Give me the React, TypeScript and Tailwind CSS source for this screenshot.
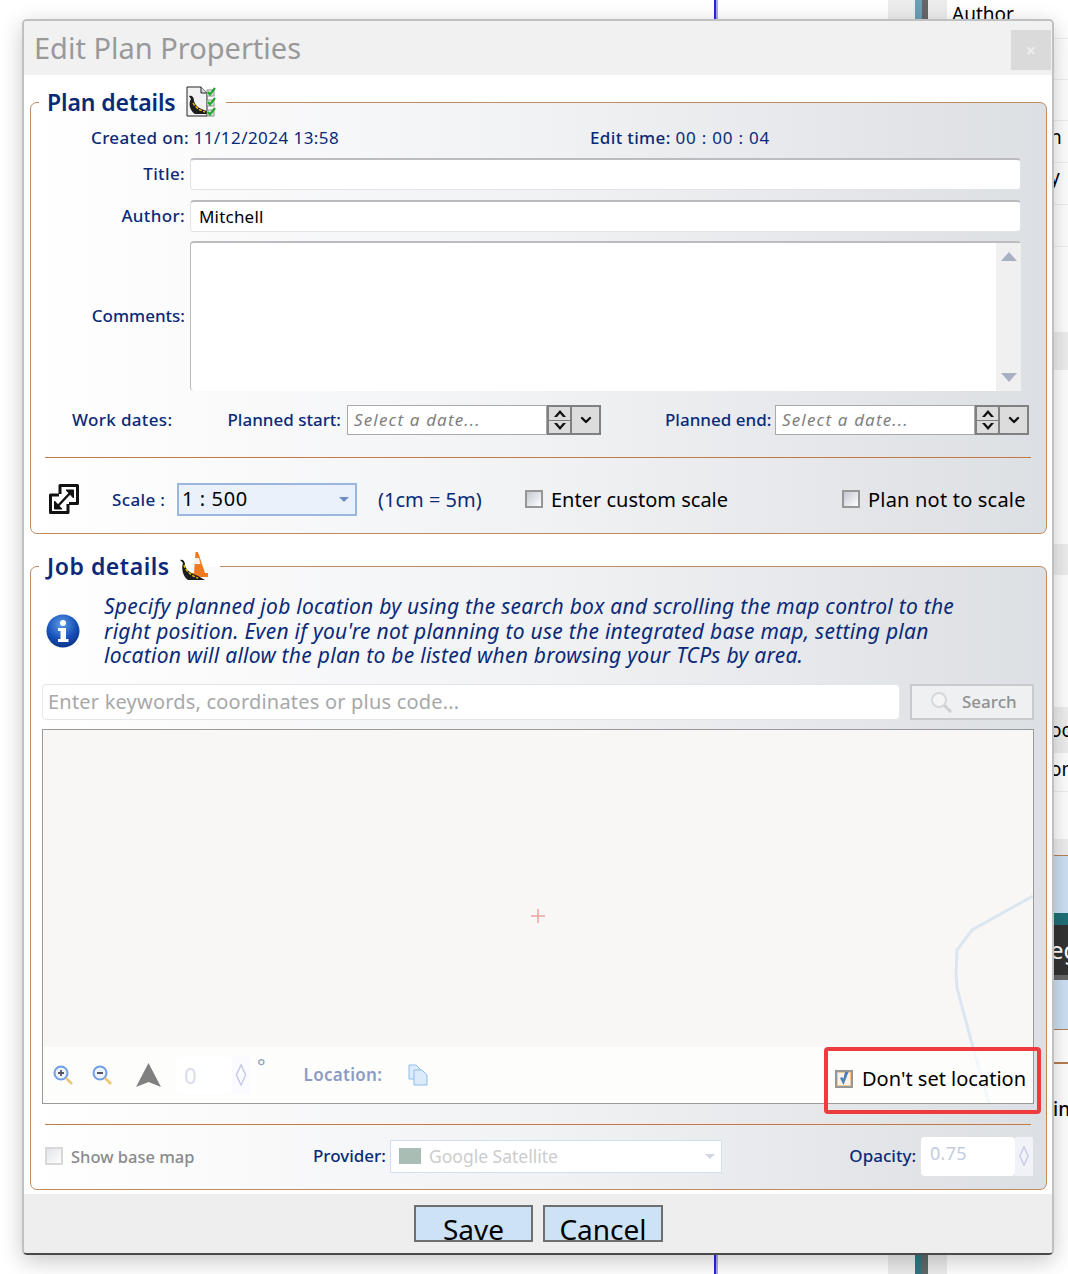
import React from "react";
import { ChevronDown } from "lucide-react";

const FONT = "font-['Noto_Sans','DejaVu_Sans',sans-serif]";

const BackgroundRow = ({ h, text, band, x = 103, pb = 0 }: { h: number; text?: string; band?: boolean; x?: number; pb?: number }) => (
  <div
    className={`flex items-center border-b border-[#eeeeee] text-[19px] text-black ${band ? "bg-[#eeeeee]" : "bg-white"}`}
    style={{ height: h, paddingLeft: x, paddingBottom: pb }}
  >
    {text}
  </div>
);

const PageBehind = () => (
  <div className="absolute inset-0 flex bg-white">
    <div className="w-[714px]" />
    <div className="w-[4px] border-l-2 border-[#2a22d8] bg-[#a9a6f0]" />
    <div className="w-[170px]" />
    <div className="w-[27px] bg-[#ececec]" />
    <div className="w-[7px] bg-gradient-to-b from-[#6a9fb5] to-[#2a7a80]" />
    <div className="w-[6px] bg-[#666666]" />
    <div className="w-[19px] bg-[#ececec]" />
    <div className="flex w-[121px] flex-col overflow-hidden">
      <BackgroundRow h={39} text="Author" x={5} pb={9} />
      <BackgroundRow h={41} />
      <BackgroundRow h={41} />
      <BackgroundRow h={42} text="n" pb={8} />
      <BackgroundRow h={42} text="y" pb={12} />
      <BackgroundRow h={42} />
      <BackgroundRow h={86} />
      <BackgroundRow h={37} band />
      <BackgroundRow h={175} />
      <BackgroundRow h={30} band />
      <BackgroundRow h={133} />
      <BackgroundRow h={45} text="oo" band />
      <BackgroundRow h={39} text="on" pb={6} />
      <BackgroundRow h={48} />
      <BackgroundRow h={15} band />
      <div className="flex h-[175px] flex-col border-y border-[#b87f50] bg-[#cde0f5]">
        <div className="h-[57px]" />
        <div className="h-[12px] bg-[#1f7078]" />
        <div className="flex h-[50px] items-center bg-[#333333] pl-[103px] text-[24px] text-white">eg</div>
        <div className="h-[5px] bg-[#666666]" />
      </div>
      <div className="h-[32px]" />
      <div className="h-[2px] bg-[#b87f50]" />
      <div className="flex h-[90px] items-center pl-[106px] text-[19px] font-medium text-black">in</div>
    </div>
  </div>
);

const Checkbox = ({ checked, dim }: { checked?: boolean; dim?: boolean }) => (
  <div
    className={`flex size-[18px] shrink-0 items-center justify-center border-2 ${dim ? "border-[#d8d8d8]" : "border-[#969696]"} ${
      checked ? "bg-[#f7c79b]" : dim ? "bg-gradient-to-br from-[#e2e4e8] to-white" : "bg-gradient-to-br from-[#c3c8d2] to-white"
    }`}
  >
    {checked && (
      <svg viewBox="0 0 14 14" className="size-[14px]">
        <rect x="1" y="1" width="12" height="12" fill="#fff3e6" />
        <path d="M3 6 L6.5 13 L11.5 0 L8 0 L6.3 7 L5.3 5 Z" fill="#4a7fc0" />
      </svg>
    )}
  </div>
);

const DatePicker = () => (
  <div className="flex h-[30px] w-[254px]">
    <div className="flex w-[200px] items-center border border-[#a9a9a9] bg-white pl-[6px] text-[17px] italic tracking-[1.15px] text-[#7f7f7f]">
      Select a date...
    </div>
    <div className="flex w-[25px] flex-col border-2 border-[#808080] bg-[#dcdcdc]">
      <div className="flex flex-1 items-center justify-center border-b border-[#808080]">
        <svg viewBox="0 0 12 7" className="w-[12px]"><path d="M0 7 L6 0 L12 7 L9 7 L6 3.5 L3 7 Z" fill="#111" /></svg>
      </div>
      <div className="flex flex-1 items-center justify-center">
        <svg viewBox="0 0 12 7" className="w-[12px]"><path d="M0 0 L6 7 L12 0 L9 0 L6 3.5 L3 0 Z" fill="#111" /></svg>
      </div>
    </div>
    <div className="flex w-[29px] items-center justify-center border-2 border-l-0 border-[#808080] bg-[#dcdcdc]">
      <ChevronDown size={16} strokeWidth={3.5} color="#111" />
    </div>
  </div>
);

const TextBox = ({ value }: { value?: string }) => (
  <div className="ml-[5px] flex h-[32px] w-[831px] items-center rounded-[4px] border border-t-2 border-[#e1e3e8] border-t-[#bcbcc0] bg-white pl-[8px] text-[17px] tracking-[0.2px] text-black">
    {value}
  </div>
);

const Slug = ({ x = 0, y = 0 }: { x?: number; y?: number }) => (
  <g transform={`translate(${x} ${y})`}>
    <path d="M2 2 C5 1 7 3 7 7 C8 12 13 15 20 17 L22 20 L8 20 C3 17 1 9 4 5 Z" fill="#1c1c1c" />
    <path d="M6 9 C8 13 12 16 18 18" stroke="#f2c200" strokeWidth="1.4" strokeDasharray="3 1.5" fill="none" />
  </g>
);

const PlanIcon = () => (
  <svg viewBox="0 0 30 32" className="h-[32px] w-[30px]">
    <path d="M1 1 H15 L21 7 V30 H1 Z" fill="#f2f2f2" stroke="#222" strokeWidth="1" />
    <path d="M15 1 V7 H21" fill="#ddd" stroke="#222" strokeWidth="1" />
    <Slug x={1} y={8} />
    {[4, 14, 24].map((y) => (
      <g key={y}>
        <rect x="21" y={y} width="7" height="6" fill="#e8e8e8" stroke="#777" strokeWidth="0.8" />
        <path d={`M22 ${y + 2} L24 ${y + 4.5} L29 ${y - 2}`} stroke="#1faa2e" strokeWidth="2.2" fill="none" />
      </g>
    ))}
  </svg>
);

const ConeIcon = () => (
  <svg viewBox="0 0 30 30" className="h-[30px] w-[30px]">
    <path d="M15.5 1 L18 1 L25 22 H28 V26 H12 V22 H14 Z" fill="#f07a22" />
    <path d="M15 7 H19 L20.5 13 H13.5 Z" fill="#f4f0ea" />
    <path d="M0 9 C3 8 5 10 5 14 C6 19 10 22 18 25 L25 29 H8 C3 26 1 17 3 12 Z" fill="#1c1c1c" />
    <path d="M4 14 C6 20 10 24 18 27" stroke="#f2c200" strokeWidth="1.4" strokeDasharray="3 1.5" fill="none" />
  </svg>
);

const ScaleIcon = () => (
  <svg viewBox="0 0 32 32" className="h-[32px] w-[32px]" fill="none" stroke="#111" strokeWidth="3">
    <path d="M12 11 V2.5 H29.5 V20.5 H21" strokeLinejoin="round" />
    <path d="M11 12 H2.5 V29.5 H20 V21" strokeLinejoin="round" />
    <path d="M8 25 L24 8" strokeWidth="2.4" />
    <path d="M18 7 H25.5 V15 Z" fill="#111" strokeWidth="1" />
    <path d="M6.5 18 V26 H14 Z" fill="#111" strokeWidth="1" />
  </svg>
);

const InfoIcon = () => (
  <svg viewBox="0 0 34 34" className="size-[34px]">
    <defs>
      <radialGradient id="infoBlue" cx="45%" cy="30%" r="75%">
        <stop offset="0%" stopColor="#5f9be8" />
        <stop offset="60%" stopColor="#1550b8" />
        <stop offset="100%" stopColor="#0a2f80" />
      </radialGradient>
    </defs>
    <circle cx="17" cy="17" r="16.5" fill="url(#infoBlue)" />
    <circle cx="17" cy="9" r="3" fill="#fff" />
    <path d="M12 14 H20 V25 H22.5 V28 H12 V25 H14.5 V17 H12 Z" fill="#fff" />
  </svg>
);

const ZoomIcon = ({ plus }: { plus?: boolean }) => (
  <svg viewBox="0 0 20 20" className="size-[20px]">
    <circle cx="8" cy="8" r="6.5" fill="#eef4fc" stroke="#6f9ee6" strokeWidth="2" />
    <path d="M5 8 H11" stroke="#556" strokeWidth="1.8" />
    {plus && <path d="M8 5 V11" stroke="#556" strokeWidth="1.8" />}
    <path d="M13 13 L19 19" stroke="#eec676" strokeWidth="2.6" />
  </svg>
);

const Diamond = ({ h = 22 }: { h?: number }) => (
  <svg viewBox="0 0 12 24" style={{ height: h }} className="w-[12px]" fill="none" stroke="#c3cbe6" strokeWidth="1.6">
    <path d="M6 1 L11 12 L6 23 L1 12 Z" />
  </svg>
);

const Fieldset = ({ legend, icon, children, className, legendClass }: { legend: string; icon: React.ReactNode; children: React.ReactNode; className: string; legendClass: string }) => (
  <fieldset className={`ml-[6px] mr-[5px] rounded-[7px] border border-[#c08a5e] bg-gradient-to-r from-white via-[#f1f2f4] to-[#dcdfe3] ${className}`}>
    <legend className={`ml-[8px] flex h-[30px] items-center gap-[10px] pl-[8px] pr-[10px] text-[23px] font-semibold text-[#0a2a78] ${legendClass}`}>
      {legend}
      {icon}
    </legend>
    {children}
  </fieldset>
);

const labelCls = "whitespace-nowrap text-[17px] font-medium tracking-[0.35px] text-[#0a2a78]";
const plainLabelCls = "whitespace-nowrap text-[17px] font-medium text-[#0a2a78]";

export default function App() {
  return (
    <div className={`relative h-[1274px] w-[1068px] overflow-hidden bg-white ${FONT}`}>
      <PageBehind />
      <div className="absolute left-[22px] top-[19px] flex h-[1236px] w-[1032px] flex-col overflow-hidden rounded-[5px] border-2 border-[#c0c0c0] border-b-[#4a4a4a] bg-white shadow-[0_6px_22px_rgba(0,0,0,0.22)]">
        <div className="flex h-[54px] shrink-0 justify-between bg-[#f1f1f1] pl-[10px] pr-[1px]">
          <div className="self-center text-[29px] text-[#999999]">Edit Plan Properties</div>
          <div className="mt-[9px] flex size-[40px] items-center justify-center bg-[#dadada] text-[18px] font-bold leading-none text-[#ededed]">×</div>
        </div>

        <div className="relative flex-1">
          <Fieldset legend="Plan details" icon={<PlanIcon />} className="mt-[12px] h-[447px]" legendClass="tracking-[-0.1px]">
            <div className="mt-[9px] flex h-[24px] items-center">
              <div className={`${labelCls} ml-[60px] w-[499px]`}>
                Created on: <span className="font-normal tracking-[0.45px]">11/12/2024 13:58</span>
              </div>
              <div className={labelCls}>
                Edit time: <span className="font-normal tracking-[0.8px]">00 : 00 : 04</span>
              </div>
            </div>
            <div className="mt-[8px] flex items-center">
              <div className={`${labelCls} w-[154px] text-right`}>Title:</div>
              <TextBox />
            </div>
            <div className="mt-[10px] flex items-center">
              <div className={`${labelCls} w-[154px] text-right`}>Author:</div>
              <TextBox value="Mitchell" />
            </div>
            <div className="mt-[9px] flex items-center">
              <div className={`${plainLabelCls} w-[154px] text-right`}>Comments:</div>
              <div className="ml-[5px] flex h-[150px] w-[831px] rounded-[4px] border-l border-t-2 border-[#bcbcc0] bg-white">
                <div className="flex-1" />
                <div className="flex w-[25px] flex-col items-center justify-between bg-[#f0f0f0] py-[9px]">
                  <div className="size-0 border-x-[8px] border-b-[9px] border-x-transparent border-b-[#a9b0c4]" />
                  <div className="size-0 border-x-[8px] border-t-[9px] border-x-transparent border-t-[#a9b0c4]" />
                </div>
              </div>
            </div>
            <div className="mt-[14px] flex h-[30px] items-center">
              <div className={`${labelCls} ml-[41px] w-[148px]`}>Work dates:</div>
              <div className={`${plainLabelCls} w-[121px] text-right`}>Planned start:</div>
              <div className="ml-[6px]"><DatePicker /></div>
              <div className={`${plainLabelCls} ml-[64px] w-[105px] text-right`}>Planned end:</div>
              <div className="ml-[5px]"><DatePicker /></div>
            </div>
            <div className="mx-[14px] mt-[22px] h-[1px] w-[986px] bg-[#c47a45]" />
            <div className="mt-[24px] flex h-[34px] items-center">
              <div className="ml-[17px] w-[64px]"><ScaleIcon /></div>
              <div className={`${labelCls} mt-[1px] w-[65px]`}>Scale :</div>
              <div className="flex h-[33px] w-[180px] items-center justify-between border-2 border-[#9ab8de] bg-[#eaf1fa] pl-[3px] pr-[6px] text-[20px] tracking-[0.6px] text-black">
                1 : 500
                <div className="size-0 border-x-[5px] border-t-[5px] border-x-transparent border-t-[#6f8fc0]" />
              </div>
              <div className="ml-[21px] mt-[1px] w-[147px] text-[20px] text-[#0a2a78]">(1cm = 5m)</div>
              <Checkbox />
              <div className="ml-[8px] mt-[1px] w-[291px] text-[20px] text-black">Enter custom scale</div>
              <Checkbox />
              <div className="ml-[8px] mt-[1px] text-[20px] tracking-[0.2px] text-black">Plan not to scale</div>
            </div>
          </Fieldset>

          <Fieldset legend="Job details" icon={<ConeIcon />} className="mt-[17px] h-[639px]" legendClass="tracking-[0.55px]">
            <div className="flex h-[88px] items-center pl-[15px] pt-[12px]">
              <InfoIcon />
              <div className="ml-[24px] w-[880px] text-[21px] italic leading-[24.5px] tracking-[0.27px] text-[#0a2a78]">
                Specify planned job location by using the search box and scrolling the map control to the<br />
                right position. Even if you're not planning to use the integrated base map, setting plan<br />
                location will allow the plan to be listed when browsing your TCPs by area.
              </div>
            </div>
            <div className="ml-[11px] mt-[15px] flex h-[36px] w-[992px] justify-between">
              <div className="flex w-[858px] items-center rounded-[4px] border border-[#e4e6ea] bg-white pl-[5px] text-[20px] tracking-[0.2px] text-[#a8a8a8]">
                Enter keywords, coordinates or plus code...
              </div>
              <div className="flex w-[124px] items-center gap-[10px] border-2 border-[#c8cace] bg-[#eff0f2] pl-[18px] text-[17px] font-medium text-[#909090]">
                <svg viewBox="0 0 22 22" className="size-[22px]">
                  <circle cx="9" cy="9" r="7" fill="#f4f4f4" stroke="#d6d8dc" strokeWidth="2" />
                  <path d="M14 14 L21 21" stroke="#d0d0d0" strokeWidth="3" />
                </svg>
                Search
              </div>
            </div>
            <div className="relative ml-[11px] mt-[9px] h-[375px] w-[992px] border border-[#9a9a9a] bg-[#f8f7f5]">
              <svg viewBox="0 0 990 373" className="absolute inset-0 h-full w-full" fill="none">
                <path d="M990 166 L929 200 L914 220 L913 243 L914 258 L928 310 L946 373" stroke="#dce6f0" strokeWidth="3" />
                <path d="M495 179 V193 M488 186 H502" stroke="#f4a0a0" strokeWidth="1.5" />
              </svg>
              <div className="absolute inset-x-0 bottom-0 flex h-[56px] items-center bg-white/70 pl-[10px]">
                <ZoomIcon plus />
                <div className="ml-[19px]"><ZoomIcon /></div>
                <svg viewBox="0 0 25 24" className="ml-[24px] h-[24px] w-[25px]"><path d="M12.5 0 L25 24 L12.5 19 L0 24 Z" fill="#808080" /></svg>
                <div className="ml-[15px] flex h-[37px] w-[56px] items-center rounded-[4px] bg-white pl-[8px] text-[22px] text-[#d8dde8]">0</div>
                <div className="flex h-[37px] w-[18px] items-center justify-center bg-[#fbfbff]"><Diamond h={22} /></div>
                <div className="mb-[16px] ml-[7px] text-[20px] leading-none text-[#8c9cc4]">°</div>
                <div className="ml-[38px] text-[17px] font-semibold tracking-[0.3px] text-[#8c9cc4]">Location:</div>
                <svg viewBox="0 0 20 22" className="ml-[26px] h-[22px] w-[20px]" fill="#dcebfa" stroke="#8fbcec" strokeWidth="1">
                  <path d="M1 1 H8 L12 5 V15 H1 Z" />
                  <path d="M6 6 H14 L19 11 V21 H6 Z" />
                </svg>
              </div>
              <div className="absolute bottom-[9px] right-[7px] flex items-center">
                <Checkbox checked />
                <div className="ml-[9px] text-[20px] text-black">Don't set location</div>
              </div>
              <div className="absolute left-[781px] top-[317px] h-[67px] w-[217px] rounded-[4px] border-4 border-[#ef3b3f]" />
            </div>
            <div className="mx-[14px] mt-[20px] h-[1px] w-[986px] bg-[#c47a45]" />
            <div className="mt-[11px] flex h-[40px] items-center">
              <div className="ml-[14px]"><Checkbox dim /></div>
              <div className="ml-[8px] mt-[2px] w-[242px] text-[16.5px] font-medium text-[#8a8a8a]">Show base map</div>
              <div className={`${plainLabelCls} w-[72px]`}>Provider:</div>
              <div className="ml-[5px] flex h-[33px] w-[332px] items-center border border-[#cfe0f4] bg-white pl-[8px] pr-[6px] text-[17.5px] text-[#cccccc]">
                <div className="mr-[8px] h-[16px] w-[22px] bg-[#a9bdb4]" />
                Google Satellite
                <div className="ml-auto size-0 border-x-[5px] border-t-[5px] border-x-transparent border-t-[#cfd6e6]" />
              </div>
              <div className={`${plainLabelCls} ml-[122px] w-[72px] text-right`}>Opacity:</div>
              <div className="ml-[5px] flex h-[39px] w-[94px] items-center rounded-[4px] bg-white pb-[5px] pl-[9px] text-[18px] tracking-[0.3px] text-[#c3cbe0]">0.75</div>
              <div className="flex h-[39px] w-[18px] items-center justify-center bg-[#f1f2f8]"><Diamond h={20} /></div>
            </div>
          </Fieldset>
        </div>

        <div className="flex h-[59px] shrink-0 bg-[#eeeeee] pl-[390px] pt-[11px]">
          <div className="h-[37px] w-[119px] overflow-hidden border-2 border-[#6f6f6f] bg-[#cde3f5] text-center text-[28px] leading-[44px] text-black">Save</div>
          <div className="ml-[10px] h-[37px] w-[120px] overflow-hidden border-2 border-[#6f6f6f] bg-[#cde3f5] text-center text-[28px] leading-[44px] text-black">Cancel</div>
        </div>
      </div>
    </div>
  );
}
